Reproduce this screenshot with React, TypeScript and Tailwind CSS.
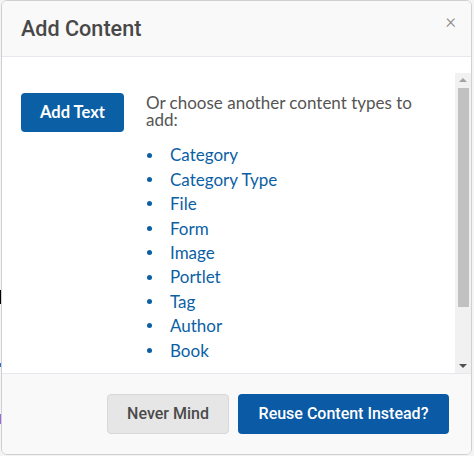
import React from "react";

const items = ["Category", "Category Type", "File", "Form", "Image", "Portlet", "Tag", "Author", "Book"];

export default function App() {
  return (
    <div className="w-[474px] h-[456px] bg-[#f4f4f4] flex relative overflow-hidden">
      <div className="absolute left-0 top-[290px] w-[1px] h-[14px] bg-black" />
      <div className="absolute left-0 top-[363px] w-[1px] h-[4px] bg-[#2a6fd0]" />
      <div className="absolute left-0 top-[414px] w-[1px] h-[10px] bg-[#9a6ad8]" />
      <div className="ml-[1px] w-[471px] h-[455px] bg-white border border-[#cfcfd4] rounded-[6px] flex flex-col overflow-hidden">
        <div className="h-[56px] shrink-0 bg-[#f9f9f9] border-b border-[#e7e7ed] flex items-center justify-between pl-[19px] pr-[15px]">
          <h1 className="text-[21.6px] font-medium text-[#484848] font-['Roboto',sans-serif] leading-none mt-[1px]">Add Content</h1>
          <span className="text-[#8a8a8a] text-[20px] leading-none font-['Roboto',sans-serif] font-light -mt-[16px]">×</span>
        </div>
        <div className="flex-1 pt-[16px] flex flex-col min-h-0">
          <div className="flex-1 flex min-h-0">
            <div className="flex-1 flex pt-[20px] pl-[19px] font-['Lato',sans-serif]">
              <button className="w-[103px] h-[39px] bg-[#0b5fa5] rounded-[4px] text-white text-[16.5px] font-bold shrink-0">Add Text</button>
              <div className="ml-[22px] pt-[1px]">
                <p className="text-[17px] leading-[17px] text-[#555555] w-[280px]">Or choose another content types to add:</p>
                <ul className="mt-[15px]">
                  {items.map((t) => (
                    <li key={t} className="flex items-center h-[24.4px] text-[17px] text-[#0b5fa5]">
                      <span className="w-[5px] h-[5px] rounded-full bg-[#0b5fa5] ml-[1px] mr-[18px]" />
                      {t}
                    </li>
                  ))}
                </ul>
              </div>
            </div>
            <div className="w-[16px] bg-[#f1f1f1] flex flex-col items-center shrink-0">
              <div className="h-[14px] flex items-center justify-center">
                <div className="w-0 h-0 border-l-[4px] border-r-[4px] border-b-[4px] border-l-transparent border-r-transparent border-b-[#a3a3a3]" />
              </div>
              <div className="w-[11px] h-[219px] bg-[#c1c1c1] mt-[1px]" />
              <div className="flex-1" />
              <div className="h-[14px] flex items-center justify-center">
                <div className="w-0 h-0 border-l-[4px] border-r-[4px] border-t-[4px] border-l-transparent border-r-transparent border-t-[#505050]" />
              </div>
            </div>
          </div>
        </div>
        <div className="h-[81px] shrink-0 bg-[#f9f9f9] border-t border-[#e7e7ed] flex items-start justify-end pt-[20px] pr-[22px] gap-[9px] font-['Roboto',sans-serif]">
          <button className="w-[122px] h-[40px] bg-[#e6e6e6] border border-[#d8d8d8] rounded-[4px] text-[#4b4b4b] text-[16px] font-medium">Never Mind</button>
          <button className="w-[211px] h-[40px] bg-[#0b5aa5] rounded-[4px] text-white text-[16px] font-medium">Reuse Content Instead?</button>
        </div>
      </div>
    </div>
  );
}
